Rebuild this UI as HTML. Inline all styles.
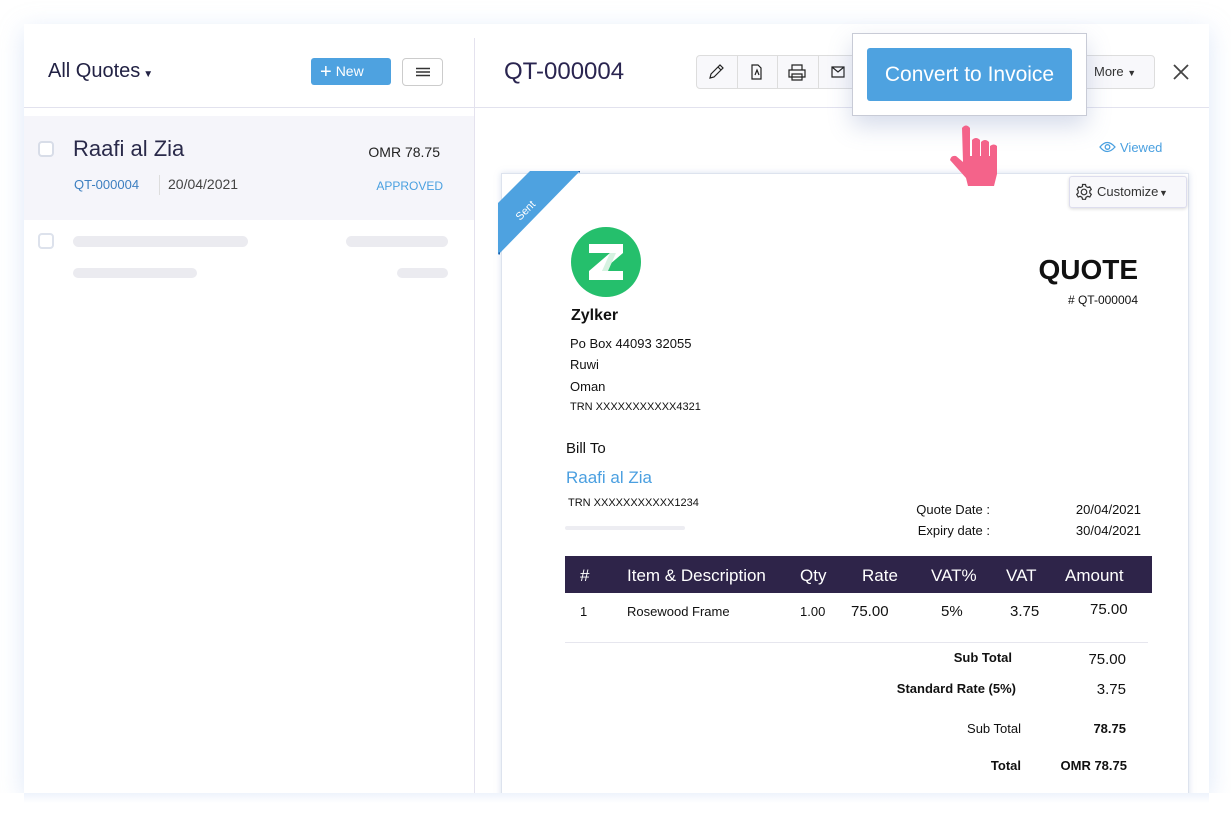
<!DOCTYPE html>
<html><head><meta charset="utf-8"><style>
*{margin:0;padding:0;box-sizing:border-box}
body{width:1231px;height:815px;background:#fff;position:relative;overflow:hidden;font-family:"Liberation Sans",sans-serif;color:#222}
.a{position:absolute;white-space:nowrap}
.r{text-align:right}
</style></head><body>
<div class="a" style="left:24px;top:24px;width:1185px;height:769px;background:#fff;box-shadow:0 6px 24px rgba(160,190,235,.35)"></div>
<!-- left pane -->
<div class="a" style="left:474px;top:38px;width:1px;height:755px;background:#e4e2ee"></div>
<div class="a" style="left:24px;top:107px;width:1185px;height:1px;background:#e2e2ee"></div>
<div class="a" style="left:48px;top:60px;font-size:20px;color:#222244">All Quotes<span style="font-size:10px;margin-left:3px">▼</span></div>
<div class="a" style="left:311px;top:58px;width:80px;height:27px;background:#4ea2e0;border-radius:3px;color:#fff;font-size:14px;line-height:27px;padding-left:9px"><span style="font-size:20px;vertical-align:-2px;margin-right:4px">+</span>New</div>
<div class="a" style="left:402px;top:58px;width:41px;height:28px;border:1px solid #ccc;border-radius:4px">
<svg style="position:absolute;left:12px;top:8px" width="16" height="10" stroke="#333" stroke-width="1.5"><path d="M1 1.5h14M1 5h14M1 8.5h14"/></svg></div>
<div class="a" style="left:24px;top:116px;width:450px;height:104px;background:#f5f5fa"></div>
<div class="a" style="left:38px;top:141px;width:16px;height:16px;border:2px solid #d8dde8;border-radius:4px;background:#fff"></div>
<div class="a" style="left:73px;top:136px;font-size:22px;color:#2a2a4a">Raafi al Zia</div>
<div class="a r" style="left:340px;width:100px;top:144px;font-size:14px;color:#222">OMR 78.75</div>
<div class="a" style="left:74px;top:177px;font-size:13px;color:#3d7fc0">QT-000004</div>
<div class="a" style="left:159px;top:175px;width:1px;height:20px;background:#ddd"></div>
<div class="a" style="left:168px;top:176px;font-size:14px;color:#444">20/04/2021</div>
<div class="a r" style="left:343px;width:100px;top:179px;font-size:12px;color:#4aa0e0">APPROVED</div>
<div class="a" style="left:38px;top:233px;width:16px;height:16px;border:2px solid #dde2ec;border-radius:4px"></div>
<div class="a" style="left:73px;top:236px;width:175px;height:11px;border-radius:6px;background:#ebebf0"></div>
<div class="a" style="left:346px;top:236px;width:102px;height:11px;border-radius:6px;background:#ebebf0"></div>
<div class="a" style="left:73px;top:268px;width:124px;height:10px;border-radius:6px;background:#ebebf0"></div>
<div class="a" style="left:397px;top:268px;width:51px;height:10px;border-radius:6px;background:#ebebf0"></div>
<!-- right header -->
<div class="a" style="left:504px;top:58px;font-size:24px;color:#2a2550">QT-000004</div>
<div class="a" style="left:696px;top:55px;width:170px;height:34px;border:1px solid #ddd;border-radius:4px;background:#f8f8fb"></div>
<div class="a" style="left:737px;top:56px;width:1px;height:32px;background:#ddd"></div>
<div class="a" style="left:777px;top:56px;width:1px;height:32px;background:#ddd"></div>
<div class="a" style="left:818px;top:56px;width:1px;height:32px;background:#ddd"></div>
<svg class="a" style="left:696px;top:55px" width="170" height="34" fill="none" stroke="#222" stroke-width="1.2">
<path d="M14 23l1-4 9-9 3 3-9 9z M22 12l3 3"/>
<path d="M56 10h6l3 3v11h-9z M59 20l2-5 2 5"/>
<path d="M96 15v-5h10v5 M93 15h16v7h-16z M96 19h10v6h-10z"/>
<path d="M136 12h12v10h-12z M136 12l6 5 6-5"/>
</svg>
<div class="a" style="left:1080px;top:55px;width:75px;height:34px;border:1px solid #ddd;border-radius:4px;background:#f8f8fb;font-size:13px;line-height:32px;padding-left:13px;color:#333">More <span style="font-size:9px">▼</span></div>
<svg class="a" style="left:1173px;top:64px" width="16" height="16" stroke="#444" stroke-width="1.8"><path d="M1 1l14 14M15 1L1 15"/></svg>
<div class="a" style="left:852px;top:33px;width:235px;height:83px;background:#fff;border:1px solid #c8cbd6;box-shadow:0 10px 22px rgba(120,140,190,.3)"></div>
<div class="a" style="left:867px;top:48px;width:205px;height:53px;background:#4ea2e0;border-radius:3px;color:#fff;font-size:21px;line-height:53px;text-align:center">Convert to Invoice</div>
<svg class="a" style="left:1099px;top:141px" width="17" height="12" fill="none" stroke="#4aa0e0" stroke-width="1.3"><path d="M1 6q7-9 15 0q-8 9-15 0z"/><circle cx="8.5" cy="6" r="2.3"/></svg>
<div class="a" style="left:1120px;top:140px;font-size:13px;color:#4aa0e0">Viewed</div>
<!-- document -->
<div class="a" style="left:501px;top:173px;width:688px;height:640px;background:#fff;border:1px solid #dde3ee;box-shadow:0 0 6px rgba(150,170,210,.35)"></div>
<svg class="a" style="left:498px;top:171px" width="84" height="86"><path d="M32 0h50L0 84V32z" fill="#4ea2e0"/><path d="M0 82l2 2v-3z M80 0l2 2v-2z" fill="#1e5fa8"/><text x="0" y="0" transform="translate(22 50) rotate(-45)" fill="#fff" font-size="11" font-family="Liberation Sans">Sent</text></svg>
<div class="a" style="left:1069px;top:176px;width:118px;height:32px;background:#f8f8fb;border:1px solid #dde;border-radius:3px;box-shadow:0 1px 3px rgba(0,0,0,.15);font-size:13px;line-height:30px;padding-left:27px;color:#333">Customize <span style="font-size:9px;margin-left:-3px">▼</span></div>
<svg class="a" style="left:1075px;top:183px" width="18" height="18" fill="none" stroke="#333" stroke-width="1.2"><circle cx="9" cy="9" r="2.8"/><path d="M7.5 1.5h3l.5 2 1.8 1 2-.7 1.5 2.6-1.5 1.4v2.2l1.5 1.4-1.5 2.6-2-.7-1.8 1-.5 2h-3l-.5-2-1.8-1-2 .7-1.5-2.6 1.5-1.4V7.8L2.2 6.4l1.5-2.6 2 .7 1.8-1z"/></svg>
<svg class="a" style="left:940px;top:120px" width="70" height="75"><path fill="#f4638a" d="M22 8q4-5 8 0v28h2v-16q4-4 8 0v16h1v-14q4-4 8 0v14h1v-10q4-3 7 0v28l-3 12h-26l-2-8-16-18q1-5 6-4l7 6z"/></svg>
<svg class="a" style="left:571px;top:227px" width="70" height="70"><circle cx="35" cy="35" r="35" fill="#25bf6c"/><path d="M18 17h34v9L31 44h21v9H18v-9l21-18H18z" fill="#fff"/><path d="M39 26L31 44h6l8-18z" fill="#d6f2e1"/></svg>
<div class="a" style="left:571px;top:307px;font-size:16px;font-weight:bold;color:#111">Zylker</div>
<div class="a" style="left:570px;top:336px;font-size:13px;color:#111">Po Box 44093 32055</div>
<div class="a" style="left:570px;top:357px;font-size:13px;color:#111">Ruwi</div>
<div class="a" style="left:570px;top:379px;font-size:13px;color:#111">Oman</div>
<div class="a" style="left:570px;top:401px;font-size:11px;color:#111">TRN XXXXXXXXXXX4321</div>
<div class="a r" style="left:940px;width:198px;top:254px;font-size:28px;font-weight:bold;color:#111">QUOTE</div>
<div class="a r" style="left:940px;width:198px;top:293px;font-size:12px;color:#111"># QT-000004</div>
<div class="a" style="left:566px;top:440px;font-size:15px;color:#111">Bill To</div>
<div class="a" style="left:566px;top:468px;font-size:17px;color:#4a9fe0">Raafi al Zia</div>
<div class="a" style="left:568px;top:497px;font-size:11px;color:#111">TRN XXXXXXXXXXX1234</div>
<div class="a" style="left:565px;top:526px;width:120px;height:4px;border-radius:2px;background:#ededf2"></div>
<div class="a r" style="left:880px;width:110px;top:502px;font-size:13px;color:#111">Quote Date :</div>
<div class="a r" style="left:880px;width:110px;top:523px;font-size:13px;color:#111">Expiry date :</div>
<div class="a r" style="left:1040px;width:101px;top:502px;font-size:13px;color:#111">20/04/2021</div>
<div class="a r" style="left:1040px;width:101px;top:523px;font-size:13px;color:#111">30/04/2021</div>
<div class="a" style="left:565px;top:556px;width:587px;height:37px;background:#2e2449"></div>
<div class="a" style="top:566px;left:0;width:1231px;font-size:17px;color:#fff">
<span class="a" style="left:580px">#</span><span class="a" style="left:627px">Item &amp; Description</span><span class="a" style="left:800px">Qty</span><span class="a" style="left:862px">Rate</span><span class="a" style="left:931px">VAT%</span><span class="a" style="left:1006px">VAT</span><span class="a" style="left:1065px">Amount</span></div>
<div class="a" style="top:604px;left:0;width:1231px;font-size:14px;color:#111">
<span class="a" style="left:580px;font-size:13px">1</span><span class="a" style="left:627px;font-size:13px">Rosewood Frame</span><span class="a" style="left:800px;font-size:13px">1.00</span><span class="a" style="left:851px;font-size:15px;top:-1px">75.00</span><span class="a" style="left:941px;font-size:15px;top:-1px">5%</span><span class="a" style="left:1010px;font-size:15px;top:-1px">3.75</span><span class="a" style="left:1090px;font-size:15px;top:-3px">75.00</span></div>
<div class="a" style="left:565px;top:642px;width:583px;height:1px;background:#e6e6ee"></div>
<div class="a r" style="left:850px;width:162px;top:650px;font-size:13px;font-weight:bold;color:#111">Sub Total</div>
<div class="a r" style="left:1020px;width:106px;top:651px;font-size:15px;color:#111">75.00</div>
<div class="a r" style="left:850px;width:166px;top:681px;font-size:13px;font-weight:bold;color:#111">Standard Rate (5%)</div>
<div class="a r" style="left:1020px;width:106px;top:681px;font-size:15px;color:#111">3.75</div>
<div class="a r" style="left:850px;width:171px;top:721px;font-size:13px;color:#111">Sub Total</div>
<div class="a r" style="left:1020px;width:106px;top:721px;font-size:13px;font-weight:bold;color:#111">78.75</div>
<div class="a r" style="left:850px;width:171px;top:758px;font-size:13px;font-weight:bold;color:#111">Total</div>
<div class="a r" style="left:1000px;width:127px;top:758px;font-size:13px;font-weight:bold;color:#111">OMR 78.75</div>
<div class="a" style="left:0;top:793px;width:1231px;height:22px;background:#fff"></div>
<div class="a" style="left:24px;top:793px;width:1185px;height:10px;background:linear-gradient(#eef3fc,#fff)"></div>
</body></html>
